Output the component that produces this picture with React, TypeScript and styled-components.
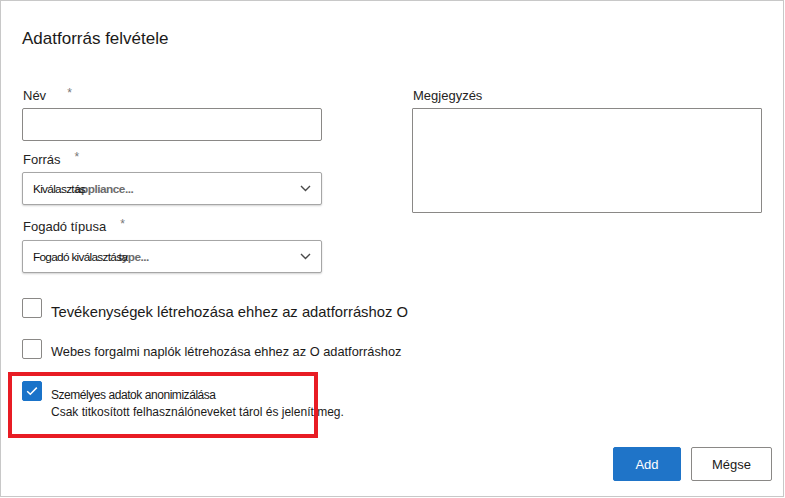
import React, { ReactElement } from "react";
import styled, { createGlobalStyle } from "styled-components";

const GlobalStyle = createGlobalStyle`
  html, body {
    margin: 0;
    padding: 0;
    background: #ffffff;
  }
  body {
    font-family: "Liberation Sans", Arial, sans-serif;
    color: #201f1e;
  }
`;

function Chevron(): ReactElement {
  return (
    <svg width="11" height="7" viewBox="0 0 11 7" fill="none">
      <path d="M1 1 L5.5 5.5 L10 1" stroke="#4a4a4a" strokeWidth="1.4" />
    </svg>
  );
}

function CheckMark(): ReactElement {
  return (
    <svg width="12" height="10" viewBox="0 0 12 10" fill="none">
      <path d="M1.2 5.2 L4.3 8.2 L10.8 1.6" stroke="#ffffff" strokeWidth="1.5" />
    </svg>
  );
}

type FieldProps = {
  label: string;
  gap?: number;
  required?: boolean;
};

function FieldLabel({ label, gap = 15, required }: FieldProps): ReactElement {
  return (
    <Label>
      {label}
      {required && <Asterisk gap={gap}>*</Asterisk>}
    </Label>
  );
}

function App(): ReactElement {
  return (
    <>
      <GlobalStyle />
      <Dialog>
        <Title>Adatforrás felvétele</Title>
        <FormRow>
          <LeftColumn>
            <Field>
              <FieldLabel label="Név" gap={21} required />
              <TextInput />
            </Field>
            <Field top={11}>
              <FieldLabel label="Forrás" gap={14} required />
              <Select>
                <SelectText>
                  <Chosen>Kiválasztás</Chosen>
                  <Ghost shift={-10}>appliance...</Ghost>
                </SelectText>
                <Chevron />
              </Select>
            </Field>
            <Field top={14}>
              <FieldLabel label="Fogadó típusa" gap={14} required />
              <Select top={5}>
                <SelectText>
                  <Chosen>Fogadó kiválasztása</Chosen>
                  <Ghost shift={-9}>type...</Ghost>
                </SelectText>
                <Chevron />
              </Select>
            </Field>
          </LeftColumn>
          <RightColumn>
            <Field>
              <FieldLabel label="Megjegyzés" />
              <TextArea />
            </Field>
          </RightColumn>
        </FormRow>

        <Options>
          <CheckRow fixed>
            <Box />
            <CheckText size={14.8} lineHeight={16} top={6}>
              Tevékenységek létrehozása ehhez az adatforráshoz O
            </CheckText>
          </CheckRow>
          <CheckRow fixed top={21}>
            <Box />
            <CheckText size={12.8} lineHeight={16} top={4.5}>
              Webes forgalmi naplók létrehozása ehhez az O adatforráshoz
            </CheckText>
          </CheckRow>
          <Highlight>
            <CheckRow>
              <Box checked>
                <CheckMark />
              </Box>
              <CheckText size={12} lineHeight={17} top={5.5}>
                <TextLine spacing={-0.45}>Személyes adatok anonimizálása</TextLine>
                <TextLine spacing={0}>Csak titkosított felhasználóneveket tárol és jelenít meg.</TextLine>
              </CheckText>
            </CheckRow>
          </Highlight>
        </Options>

        <Footer>
          <PrimaryButton>Add</PrimaryButton>
          <SecondaryButton>Mégse</SecondaryButton>
        </Footer>
      </Dialog>
    </>
  );
}

const Dialog = styled.div`
  box-sizing: border-box;
  width: 784px;
  height: 497px;
  border: 1px solid #c8c8c8;
  padding: 27px 11px 15px 21px;
  display: flex;
  flex-direction: column;
`;

const Title = styled.h1`
  margin: 0;
  font-family: "Liberation Sans", Arial, sans-serif;
  font-size: 17px;
  font-weight: 400;
  line-height: 22px;
  color: #1b1a19;
`;

const FormRow = styled.div`
  display: flex;
  margin-top: 38px;
`;

const LeftColumn = styled.div`
  width: 300px;
  display: flex;
  flex-direction: column;
`;

const RightColumn = styled.div`
  width: 350px;
  margin-left: 90px;
`;

const Field = styled.div<{ top?: number }>`
  display: flex;
  flex-direction: column;
  margin-top: ${({ top }) => top ?? 0}px;
`;

const Label = styled.div`
  display: flex;
  align-items: flex-start;
  height: 16px;
  padding-left: 1px;
  font-size: 13px;
  line-height: 16px;
  color: #252423;
`;

const Asterisk = styled.span<{ gap: number }>`
  margin-left: ${({ gap }) => gap}px;
  margin-top: -3px;
  font-size: 12px;
  color: #777;
`;

const TextInput = styled.div`
  box-sizing: border-box;
  height: 33px;
  margin-top: 4px;
  border: 1px solid #8a8886;
  border-radius: 2px;
  background: #fff;
`;

const TextArea = styled.div`
  box-sizing: border-box;
  height: 105px;
  margin-top: 4px;
  border: 1px solid #8a8886;
  border-radius: 1px;
  background: #fff;
`;

const Select = styled.div<{ top?: number }>`
  box-sizing: border-box;
  height: 33px;
  margin-top: ${({ top }) => top ?? 4}px;
  padding: 0 10px 0 10px;
  display: flex;
  align-items: center;
  justify-content: space-between;
  border: 1px solid #a6a6a6;
  border-radius: 2px;
  background: #fff;
  box-shadow: 0 1px 2px rgba(0, 0, 0, 0.18);
`;

const SelectText = styled.div`
  display: flex;
  align-items: baseline;
  font-size: 11.8px;
  white-space: nowrap;
`;

const Chosen = styled.span`
  position: relative;
  z-index: 1;
  color: #111;
  letter-spacing: -0.7px;
`;

const Ghost = styled.span<{ shift: number }>`
  margin-left: ${({ shift }) => shift}px;
  color: #6d6d6d;
  font-weight: 700;
  letter-spacing: -0.5px;
`;

const Options = styled.div`
  display: flex;
  flex-direction: column;
  margin-top: 25px;
`;

const CheckRow = styled.div<{ top?: number; fixed?: boolean }>`
  display: flex;
  align-items: flex-start;
  height: ${({ fixed }) => (fixed ? "20px" : "auto")};
  margin-top: ${({ top }) => top ?? 0}px;
`;

const Box = styled.span<{ checked?: boolean }>`
  box-sizing: border-box;
  flex: none;
  width: 20px;
  height: 20px;
  display: flex;
  align-items: center;
  justify-content: center;
  border-radius: 2px;
  border: 1px solid ${({ checked }) => (checked ? "#1a73c9" : "#8a8886")};
  background: ${({ checked }) => (checked ? "#1a73c9" : "#fff")};
`;

const CheckText = styled.div<{ size: number; lineHeight: number; top: number }>`
  margin-left: 9px;
  margin-top: ${({ top }) => top}px;
  font-size: ${({ size }) => size}px;
  line-height: ${({ lineHeight }) => lineHeight}px;
  white-space: nowrap;
  color: #1b1a19;
`;

const TextLine = styled.div<{ spacing: number }>`
  letter-spacing: ${({ spacing }) => spacing}px;
`;

const Highlight = styled.div`
  box-sizing: border-box;
  width: 310px;
  height: 66px;
  margin: 13px 0 0 -14px;
  padding: 5px 0 0 10px;
  border: 4px solid #e81c24;
`;

const Footer = styled.div`
  margin-top: auto;
  display: flex;
  justify-content: flex-end;
  gap: 10px;
`;

const BaseButton = styled.button`
  box-sizing: border-box;
  height: 34px;
  border-radius: 2px;
  font-family: "Liberation Sans", Arial, sans-serif;
  font-size: 13px;
  cursor: pointer;
`;

const PrimaryButton = styled(BaseButton)`
  width: 68px;
  border: 1px solid #1f74c8;
  background: #1f74c8;
  color: #fff;
`;

const SecondaryButton = styled(BaseButton)`
  width: 81px;
  border: 1px solid #8a8886;
  background: #fff;
  color: #1b1a19;
`;

export default App;
